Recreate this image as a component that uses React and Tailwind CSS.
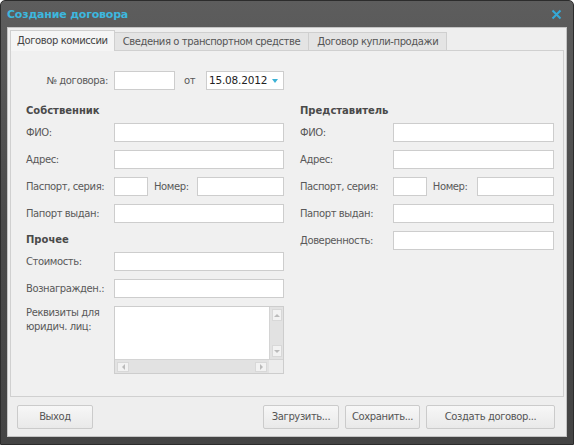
import React from "react";

function Field({ w = "w-[170px]" }) {
  return <div className={`h-[19px] ${w} bg-white border border-[#cdcdcd]`} />;
}

function Row({ label, labelW, children }) {
  return (
    <div className="flex items-center h-[19px]">
      <div className={`${labelW} shrink-0 text-[#595959]`}>{label}</div>
      {children}
    </div>
  );
}

function Heading({ children }) {
  return <div className="h-[14px] leading-[14px] font-bold text-[#4a4a4a] tracking-normal -mb-[3px] mt-[2px]">{children}</div>;
}

function Passport({ labelW, numW, lastW }) {
  return (
    <Row label="Паспорт, серия:" labelW={labelW}>
      <Field w="w-[34px]" />
      <div className={`${numW} pl-[6px] text-[#595959]`}>Номер:</div>
      <Field w={lastW} />
    </Row>
  );
}

function Btn({ children, w }) {
  return (
    <button className={`${w} h-[24px] border border-[#cbcbcb] rounded-[2px] bg-gradient-to-b from-[#f7f7f7] to-[#e9e9e9] text-[#555]`}>
      {children}
    </button>
  );
}

function TextArea() {
  return (
    <div className="w-[170px] h-[68px] border border-[#cdcdcd] bg-white flex flex-col">
      <div className="flex flex-1">
        <div className="flex-1" />
        <div className="w-[14px] bg-[#e2e2e2] border-l border-[#d4d4d4] flex flex-col justify-between items-center py-[2px]">
          <div className="w-[10px] h-[12px] bg-[#f2f2f2] border border-[#d8d8d8] flex items-center justify-center">
            <div className="w-0 h-0 border-l-[3px] border-r-[3px] border-b-[3px] border-l-transparent border-r-transparent border-b-[#bbb]" />
          </div>
          <div className="w-[10px] h-[12px] bg-[#f2f2f2] border border-[#d8d8d8] flex items-center justify-center">
            <div className="w-0 h-0 border-l-[3px] border-r-[3px] border-t-[3px] border-l-transparent border-r-transparent border-t-[#bbb]" />
          </div>
        </div>
      </div>
      <div className="flex h-[14px] border-t border-[#d4d4d4]">
        <div className="flex-1 bg-[#e2e2e2] flex justify-between items-center px-[2px]">
          <div className="w-[12px] h-[10px] bg-[#f2f2f2] border border-[#d8d8d8] flex items-center justify-center">
            <div className="w-0 h-0 border-t-[3px] border-b-[3px] border-r-[3px] border-t-transparent border-b-transparent border-r-[#bbb]" />
          </div>
          <div className="w-[12px] h-[10px] bg-[#f2f2f2] border border-[#d8d8d8] flex items-center justify-center">
            <div className="w-0 h-0 border-t-[3px] border-b-[3px] border-l-[3px] border-t-transparent border-b-transparent border-l-[#bbb]" />
          </div>
        </div>
        <div className="w-[14px] bg-[#ececec]" />
      </div>
    </div>
  );
}

export default function App() {
  return (
    <div className="w-[574px] h-[445px] font-['DejaVu_Sans',Verdana,sans-serif] text-[10px] leading-none tracking-[-0.4px]">
      <div className="w-full h-full flex flex-col rounded-t-[5px] bg-gradient-to-b from-[#5d5d5d] via-[#4a4a4a] to-[#444] border border-[#2c2c2c] px-[6px] pb-[7px]">
        <div className="h-[26px] flex items-center justify-between shrink-0 pr-[5px]">
          <div className="text-[11px] font-bold text-[#3db7de] tracking-[-0.2px]">Создание договора</div>
          <svg width="11" height="11" viewBox="0 0 11 11">
            <path d="M1.5 1.5 L9.5 9.5 M9.5 1.5 L1.5 9.5" stroke="#34a9d8" strokeWidth="2" />
          </svg>
        </div>
        <div className="flex-1 flex flex-col bg-[#eeeeee] border border-[#c4c4c4] pt-[2px] px-[2px]">
          <div className="flex items-end h-[20px] shrink-0">
            <div className="h-[21px] px-[6px] flex items-center bg-[#f5f5f5] border border-b-0 border-[#cfcfcf] text-[#444] relative top-[1px]">
              Договор комиссии
            </div>
            <div className="h-[18px] px-[8px] flex items-center bg-[#e4e4e4] border border-l-0 border-b-0 border-[#cfcfcf] text-[#555]">
              Сведения о транспортном средстве
            </div>
            <div className="h-[18px] px-[8px] flex items-center bg-[#e4e4e4] border border-l-0 border-b-0 border-[#cfcfcf] text-[#555]">
              Договор купли-продажи
            </div>
          </div>
          <div className="h-[347px] shrink-0 border border-[#d0d0d0] bg-[#f0f0f0] pl-[15px] pt-[20px]">
            <div className="flex items-center h-[19px]">
              <div className="w-[85px] text-right text-[#595959] pr-[3px]">№ договора:</div>
              <div className="w-[3px]" />
              <Field w="w-[61px]" />
              <div className="w-[31px] pl-[9px] text-[#595959]">от</div>
              <div className="w-[78px] h-[19px] bg-white border border-[#cdcdcd] flex items-center justify-between pl-[2px] pr-[5px] text-[#222] text-[10.5px] tracking-[-0.2px]">
                <span>15.08.2012</span>
                <div className="w-0 h-0 border-l-[3px] border-r-[3px] border-t-[4px] border-l-transparent border-r-transparent border-t-[#3bb2d6]" />
              </div>
            </div>
            <div className="flex mt-[12px]">
              <div className="w-[274px] flex flex-col gap-[8px]">
                <Heading>Собственник</Heading>
                <Row label="ФИО:" labelW="w-[88px]"><Field /></Row>
                <Row label="Адрес:" labelW="w-[88px]"><Field /></Row>
                <Passport labelW="w-[88px]" numW="w-[49px]" lastW="w-[87px]" />
                <Row label="Папорт выдан:" labelW="w-[88px]"><Field /></Row>
                <Heading>Прочее</Heading>
                <Row label="Стоимость:" labelW="w-[88px]"><Field /></Row>
                <Row label="Вознагражден.:" labelW="w-[88px]"><Field /></Row>
                <div className="flex">
                  <div className="w-[88px] shrink-0 text-[#595959] leading-[14px]">Реквизиты для юридич. лиц:</div>
                  <TextArea />
                </div>
              </div>
              <div className="w-[254px] flex flex-col gap-[8px]">
                <Heading>Представитель</Heading>
                <Row label="ФИО:" labelW="w-[93px]"><Field w="w-[162px]" /></Row>
                <Row label="Адрес:" labelW="w-[93px]"><Field w="w-[162px]" /></Row>
                <Passport labelW="w-[93px]" numW="w-[50px]" lastW="w-[78px]" />
                <Row label="Папорт выдан:" labelW="w-[93px]"><Field w="w-[162px]" /></Row>
                <Row label="Доверенность:" labelW="w-[93px]"><Field w="w-[162px]" /></Row>
              </div>
            </div>
          </div>
          <div className="flex-1 flex items-center pl-[7px] pr-[9px]">
            <Btn w="w-[76px]">Выход</Btn>
            <div className="flex-1" />
            <div className="flex gap-[6px]">
              <Btn w="w-[76px]">Загрузить...</Btn>
              <Btn w="w-[75px]">Сохранить...</Btn>
              <Btn w="w-[129px]">Создать договор...</Btn>
            </div>
          </div>
        </div>
      </div>
    </div>
  );
}
